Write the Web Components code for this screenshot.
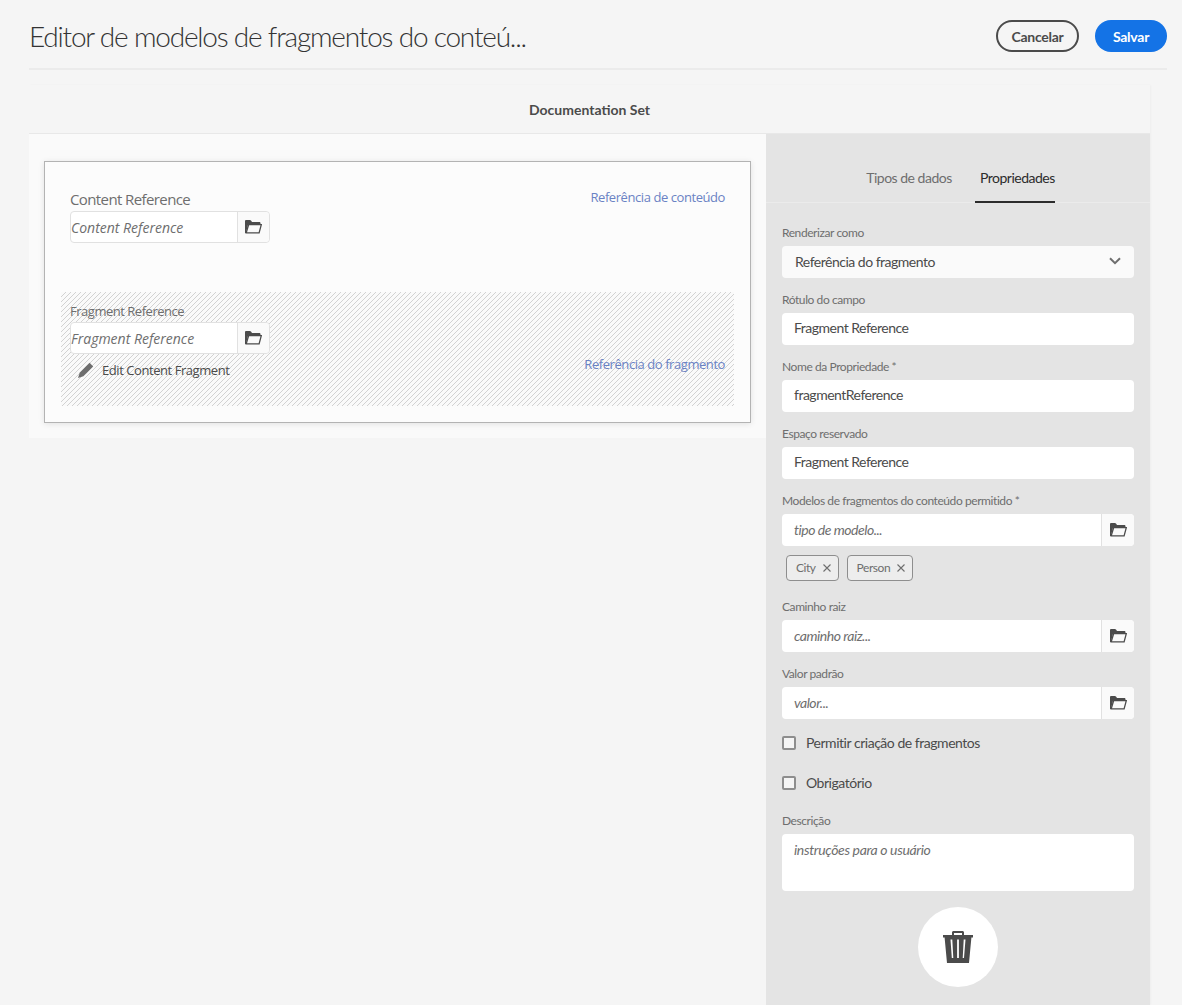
<!DOCTYPE html>
<meta charset="utf-8" />
<title>Editor de modelos</title>

<model-editor></model-editor>

<style>
	html, body {
		margin: 0;
		height: 100%;
		overflow: hidden;
		background: #f5f5f5;
		font-family: "Lato", "Liberation Sans", sans-serif;
		color: #4b4b4b;
	}
</style>

<script>
	const FOLDER = `<svg width="17" height="14" viewBox="0 0 17 14"><path fill="#4b4b4b" d="M0 1.2C0 .5.5 0 1.2 0h3.6c.5 0 .9.2 1.2.6L7 2h7.3c.7 0 1.2.5 1.2 1.2V4H3.2L.9 13H0z"/><path fill="none" stroke="#4b4b4b" stroke-width="1.3" d="M3.6 4.7h12.7l-2.2 8.2H1.2z"/></svg>`

	function define(name, css, html) {
		customElements.define(name, class extends HTMLElement {
			constructor() {
				super()
				const a = n => this.getAttribute(n) ?? ""
				this.attachShadow({ mode: "open" }).innerHTML =
					`<style>${css}</style>` + (typeof html === "function" ? html(a) : html)
			}
		})
	}

	define("top-bar", `
		:host { display: flex; align-items: center; height: 64px; padding-top: 4px; margin: 0 15px 0 29px; border-bottom: 2px solid #ebebeb; box-sizing: content-box; }
		h1 { flex: 1; margin: 0 0 1px; font-size: 28px; font-weight: 300; letter-spacing: -1.2px; color: #333; line-height: 36px; }
		.btn { box-sizing: border-box; height: 32px; border-radius: 16px; font: 700 14px "Lato", sans-serif; letter-spacing: -.25px; display: flex; align-items: center; justify-content: center; }
		.cancel { width: 83px; border: 2px solid #4b4b4b; color: #4b4b4b; margin-right: 16px; }
		.save { width: 72px; background: #1473e6; color: #fff; }
	`, a => `
		<h1>${a("heading")}</h1>
		<div class="btn cancel">Cancelar</div>
		<div class="btn save">Salvar</div>
	`)

	define("folder-input", `
		:host { display: flex; height: 32px; box-sizing: border-box; background: #fff; border-radius: 4px; }
		:host([boxed]) { border: 1px solid #e1e1e1; }
		.in { flex: 1; min-width: 0; display: flex; align-items: center; padding: 0 0 2px 12px; font-style: italic; font-size: 14px; letter-spacing: -.47px; color: #6e6e6e; }
		:host([boxed]) .in { padding: 0; font-family: "Open Sans", sans-serif; letter-spacing: 0; }
		.btn { flex: none; width: 32px; background: #fafafa; border-left: 1px solid #e1e1e1; border-radius: 0 4px 4px 0; display: flex; align-items: center; justify-content: center; }
		:host([boxed]) .btn { width: 31px; }
	`, a => `<div class="in">${a("placeholder")}</div><div class="btn">${FOLDER}</div>`)

	define("edit-canvas", `
		:host { display: block; background: #fafafa; height: 304px; padding: 27px 15px 0; box-sizing: border-box; }
		.card { box-sizing: border-box; height: 262px; background: #fcfcfc; border: 1px solid #b3b3b3; box-shadow: 0 1px 6px rgba(0,0,0,.1); padding: 0 16px; display: flex; flex-flow: column; }
		.row { display: flex; justify-content: space-between; }
		.first { padding: 26px 9px 0; height: 130px; box-sizing: border-box; }
		.first .label { font-size: 15px; line-height: 23px; font-family: "Open Sans", sans-serif; letter-spacing: -.6px; color: #6e6e6e; }
		.field { width: 200px; }
		.type { color: #6a82c4; font-size: 13px; font-family: "Open Sans", sans-serif; letter-spacing: -.43px; line-height: 20px; }
		.first .type { margin-top: -1px; }
		.second { height: 114px; box-sizing: border-box; padding: 9px 9px 0; background: repeating-linear-gradient(135deg, #d2d2d2 0 .7071px, #fafafa .7071px 3.5355px); align-items: flex-start; }
		.second .label { font-size: 13px; line-height: 21px; font-family: "Open Sans", sans-serif; letter-spacing: -.48px; color: #6e6e6e; }
		.second .type { margin-top: 53px; }
		.edit { display: flex; align-items: center; gap: 8px; padding-left: 8px; margin-top: 6px; font-size: 13px; line-height: 20px; font-family: "Open Sans", sans-serif; letter-spacing: -.44px; color: #4b4b4b; }
	`, `
		<div class="card">
			<div class="row first">
				<div class="field">
					<div class="label">Content Reference</div>
					<folder-input boxed placeholder="Content Reference"></folder-input>
				</div>
				<div class="type">Referência de conteúdo</div>
			</div>
			<div class="row second">
				<div class="field">
					<div class="label">Fragment Reference</div>
					<folder-input boxed placeholder="Fragment Reference"></folder-input>
					<div class="edit">
						<svg width="16" height="16" viewBox="0 0 16 16"><path fill="#6e6e6e" d="M11.6.8l3.600 3.600-9.800 9.800L0 16l1.800-5.400z"/></svg>
						Edit Content Fragment
					</div>
				</div>
				<div class="type">Referência do fragmento</div>
			</div>
		</div>
	`)

	define("form-field", `
		:host { display: block; margin-bottom: 10px; }
		.label { font-size: 12px; line-height: 23px; padding-bottom: 2px; letter-spacing: -.42px; color: #6e6e6e; }
		.text { height: 32px; box-sizing: border-box; background: #fff; border-radius: 4px; padding: 0 12px 3px; display: flex; align-items: center; font-size: 14px; letter-spacing: -.5px; color: #4b4b4b; }
	`, a => `
		<div class="label">${a("label")}</div>
		<slot><div class="text">${a("value")}</div></slot>
	`)

	define("tag-chip", `
		:host { display: inline-flex; align-items: center; gap: 7px; box-sizing: border-box; height: 26px; padding: 0 7px 2px 9px; background: #ededed; border: 1px solid #8e8e8e; border-radius: 4px; font-size: 12px; letter-spacing: -.45px; color: #6e6e6e; }
		svg { display: block; margin-top: 2px; }
	`, a => `${a("text")}<svg width="8" height="8" viewBox="0 0 8 8"><path stroke="#6e6e6e" stroke-width="1.1" d="M.5.5l7 7M7.5.5l-7 7"/></svg>`)

	define("check-row", `
		:host { display: flex; align-items: center; gap: 10px; height: 20px; font-size: 14px; letter-spacing: -.47px; color: #4b4b4b; }
		.box { width: 14px; height: 14px; box-sizing: border-box; border: 2px solid #8e8e8e; border-radius: 2px; background: #f5f5f5; }
	`, a => `<div class="box"></div><span style="margin-top:-1px">${a("text")}</span>`)

	define("props-panel", `
		:host { display: block; background: #e4e4e4; height: 871px; box-sizing: border-box; }
		.tabs { height: 69px; box-sizing: border-box; border-bottom: 1px solid #ebebeb; display: flex; justify-content: center; gap: 23px; padding-left: 5px; font-size: 14px; letter-spacing: -.5px; }
		.tab { line-height: 20px; height: 69px; box-sizing: border-box; padding-top: 34px; color: #6e6e6e; }
		.on { color: #2c2c2c; border-bottom: 2px solid #2c2c2c; width: 80px; text-align: right; }
		.body { padding: 18px 16px 0; }
		.select { height: 32px; box-sizing: border-box; background: #fafafa; border-radius: 4px; padding: 0 13px 2px; display: flex; align-items: center; justify-content: space-between; font-size: 14px; letter-spacing: -.5px; color: #4b4b4b; }
		.tags { display: flex; gap: 8px; padding: 9px 0 0 4px; height: 35px; box-sizing: border-box; margin-bottom: 14px; }
		.area { height: 57px; box-sizing: border-box; background: #fff; border-radius: 4px; padding: 7px 12px; font-size: 14px; font-style: italic; letter-spacing: -.35px; color: #6e6e6e; }
		.trash { width: 80px; height: 80px; border-radius: 50%; background: #fff; margin: 16px auto 0; display: flex; align-items: center; justify-content: center; }
		.checks { display: flex; flex-flow: column; gap: 20px; margin: 14px 0 16px; }
		form-field.tagged { margin-bottom: 0; }
	`, `
		<div class="tabs">
			<div class="tab">Tipos de dados</div>
			<div class="tab on">Propriedades</div>
		</div>
		<div class="body">
			<form-field label="Renderizar como">
				<div class="select">Referência do fragmento
					<svg width="12" height="8" viewBox="0 0 12 8"><path fill="none" stroke="#6e6e6e" stroke-width="2" d="M1 1.2l5 5 5-5"/></svg>
				</div>
			</form-field>
			<form-field label="Rótulo do campo" value="Fragment Reference"></form-field>
			<form-field label="Nome da Propriedade *" value="fragmentReference"></form-field>
			<form-field label="Espaço reservado" value="Fragment Reference"></form-field>
			<form-field class="tagged" label="Modelos de fragmentos do conteúdo permitido *">
				<folder-input placeholder="tipo de modelo..."></folder-input>
			</form-field>
			<div class="tags">
				<tag-chip text="City"></tag-chip>
				<tag-chip text="Person"></tag-chip>
			</div>
			<form-field label="Caminho raiz"><folder-input placeholder="caminho raiz..."></folder-input></form-field>
			<form-field label="Valor padrão"><folder-input placeholder="valor..."></folder-input></form-field>
			<div class="checks">
				<check-row text="Permitir criação de fragmentos"></check-row>
				<check-row text="Obrigatório"></check-row>
			</div>
			<form-field label="Descrição" style="margin:0">
				<div class="area">instruções para o usuário</div>
			</form-field>
			<div class="trash">
				<svg width="30" height="32" viewBox="0 0 30 32"><path fill="#4b4b4b" d="M9 4V1.500C9 .7 9.700 0 10.500 0h9c.8 0 1.500.7 1.500 1.500V4h9v2.500h-1.600L26 32H4L1.600 6.500H0V4zM11 4h8V2h-8z"/><path fill="#fff" d="M7.500 8.500h1.800l1 18.500H8.800zM14.100 8.500h1.800v18.500h-1.800zM20.700 8.500h1.800l-1.500 18.500h-1.300z"/></svg>
			</div>
		</div>
	`)

	define("model-editor", `
		:host { display: block; }
		.sheet { margin: 15px 32px 0 29px; box-shadow: 1px 0 2px rgba(0,0,0,.03); }
		.title { height: 49px; box-sizing: border-box; border-bottom: 1px solid #e8e8e8; display: flex; align-items: center; justify-content: center; padding-top: 1px; font-weight: 700; font-size: 14px; color: #4b4b4b; }
		.cols { display: grid; grid-template-columns: 737px 384px; align-items: start; }
	`, `
		<top-bar heading="Editor de modelos de fragmentos do conteú..."></top-bar>
		<div class="sheet">
			<div class="title">Documentation Set</div>
			<div class="cols">
				<edit-canvas></edit-canvas>
				<props-panel></props-panel>
			</div>
		</div>
	`)
</script>
